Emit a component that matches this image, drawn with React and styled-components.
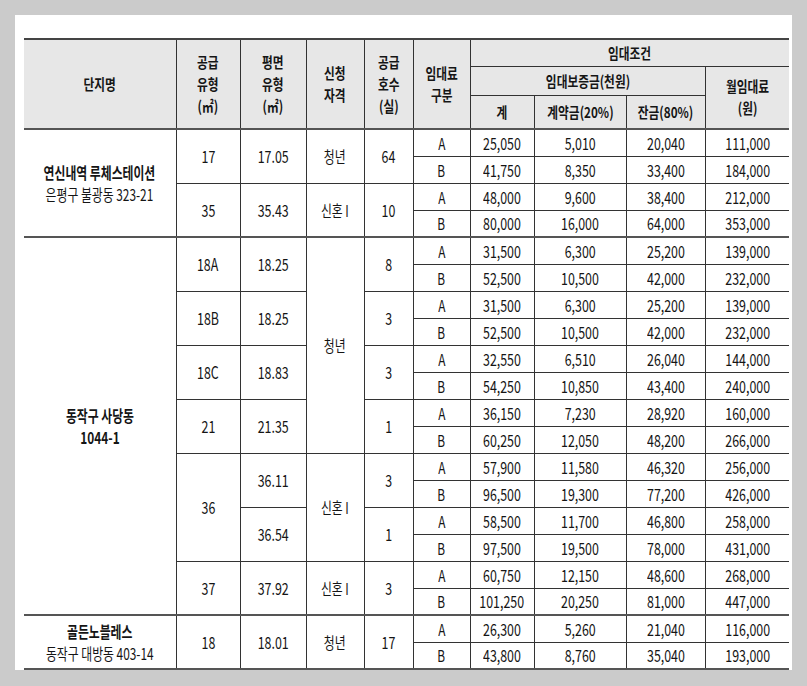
import React from 'react';
import styled, {createGlobalStyle} from 'styled-components';

const GlobalStyle = createGlobalStyle`
  body{
    margin:0;
    background:#cbcbcb;
    font-family:"Noto Sans CJK KR", "Noto Sans", sans-serif;
    color:#151515;
  }
`;

const Page = styled.div`
  padding:15px 15px 16px;
`;

const Panel = styled.div`
  width:777px;
  box-sizing:border-box;
  background:#fff;
  padding:23px 3px 0 9px;
`;

const Table = styled.table`
  width:765px;
  table-layout:fixed;
  border-collapse:collapse;
  border-top:2px solid #444;
  border-bottom:2px solid #555;
`;

const HeadRow = styled.tr`
  height:${p => p.$h}px;
`;

const Th = styled.th`
  background:#e7e7e7;
  border:1px solid #333;
  border-top:none;
  padding:0;
  font-weight:700;
  font-size:15px;
  line-height:22px;
  text-align:center;
  vertical-align:middle;

  &:first-child{border-left:none;}
  &:last-child{border-right:none;}
`;

const Row = styled.tr`
  height:27px;

  td{
    border-top:${p => p.$start ? '2px solid #555' : '1px solid #333'};
  }
`;

const Td = styled.td`
  border:1px solid #333;
  padding:0;
  font-size:${p => p.$num ? 17 : 16}px;
  line-height:22px;
  text-align:center;
  vertical-align:middle;

  &:first-child{border-left:none;}
  &:last-child{border-right:none;}
`;

const Txt = styled.span`
  display:inline-block;
  white-space:nowrap;
  margin:0 -30px;
  transform:scaleX(${p => p.$sx || 0.74});
`;

const Line = styled.div`
  font-weight:${p => p.$bold ? 700 : 400};
  font-size:16px;
`;

const widths = [152, 64, 66, 58, 49, 57, 64, 92, 79, 84];

const rows = [
  {start:true, group:{span:4, lines:[['연신내역 루체스테이션', true], ['은평구 불광동 323-21', false]]},
    type:['17', 2], area:['17.05', 2], qual:['청년', 2], units:['64', 2], k:'A', v:['25,050', '5,010', '20,040', '111,000']},
  {k:'B', v:['41,750', '8,350', '33,400', '184,000']},
  {type:['35', 2], area:['35.43', 2], qual:['신혼 I', 2], units:['10', 2], k:'A', v:['48,000', '9,600', '38,400', '212,000']},
  {k:'B', v:['80,000', '16,000', '64,000', '353,000']},
  {start:true, group:{span:14, lines:[['동작구 사당동', true], ['1044-1', true]]},
    type:['18A', 2], area:['18.25', 2], qual:['청년', 8], units:['8', 2], k:'A', v:['31,500', '6,300', '25,200', '139,000']},
  {k:'B', v:['52,500', '10,500', '42,000', '232,000']},
  {type:['18B', 2], area:['18.25', 2], units:['3', 2], k:'A', v:['31,500', '6,300', '25,200', '139,000']},
  {k:'B', v:['52,500', '10,500', '42,000', '232,000']},
  {type:['18C', 2], area:['18.83', 2], units:['3', 2], k:'A', v:['32,550', '6,510', '26,040', '144,000']},
  {k:'B', v:['54,250', '10,850', '43,400', '240,000']},
  {type:['21', 2], area:['21.35', 2], units:['1', 2], k:'A', v:['36,150', '7,230', '28,920', '160,000']},
  {k:'B', v:['60,250', '12,050', '48,200', '266,000']},
  {type:['36', 4], area:['36.11', 2], qual:['신혼 I', 4], units:['3', 2], k:'A', v:['57,900', '11,580', '46,320', '256,000']},
  {k:'B', v:['96,500', '19,300', '77,200', '426,000']},
  {area:['36.54', 2], units:['1', 2], k:'A', v:['58,500', '11,700', '46,800', '258,000']},
  {k:'B', v:['97,500', '19,500', '78,000', '431,000']},
  {type:['37', 2], area:['37.92', 2], qual:['신혼 I', 2], units:['3', 2], k:'A', v:['60,750', '12,150', '48,600', '268,000']},
  {k:'B', v:['101,250', '20,250', '81,000', '447,000']},
  {start:true, group:{span:2, lines:[['골든노블레스', true], ['동작구 대방동 403-14', false]]},
    type:['18', 2], area:['18.01', 2], qual:['청년', 2], units:['17', 2], k:'A', v:['26,300', '5,260', '21,040', '116,000']},
  {k:'B', v:['43,800', '8,760', '35,040', '193,000']},
];

// rowspan cell in the left block; numbers get the slightly larger size
const Span = ({cell, num}) => cell
  ? <Td rowSpan={cell[1]} $num={num}><Txt $sx={num ? 0.73 : 0.74}>{cell[0]}</Txt></Td>
  : null;

const Head = ({children, ...rest}) => (
  <Th {...rest}><Txt $sx={0.78}>{children}</Txt></Th>
);

const App = () => {
  return (
    <Page>
      <GlobalStyle />
      <Panel>
        <Table>
          <colgroup>
            {widths.map((w, i) => <col key={i} style={{width: w}} />)}
          </colgroup>
          <thead>
            <HeadRow $h={27}>
              <Head rowSpan={3}>단지명</Head>
              <Head rowSpan={3}>공급<br />유형<br />(㎡)</Head>
              <Head rowSpan={3}>평면<br />유형<br />(㎡)</Head>
              <Head rowSpan={3}>신청<br />자격</Head>
              <Head rowSpan={3}>공급<br />호수<br />(실)</Head>
              <Head rowSpan={3}>임대료<br />구분</Head>
              <Head colSpan={4}>임대조건</Head>
            </HeadRow>
            <HeadRow $h={29}>
              <Head colSpan={3}>임대보증금(천원)</Head>
              <Head rowSpan={2}>월임대료<br />(원)</Head>
            </HeadRow>
            <HeadRow $h={34}>
              <Head>계</Head>
              <Head>계약금(20%)</Head>
              <Head>잔금(80%)</Head>
            </HeadRow>
          </thead>
          <tbody>
            {rows.map((r, i) => (
              <Row key={i} $start={r.start}>
                {r.group && (
                  <Td rowSpan={r.group.span}>
                    <Txt>
                      {r.group.lines.map(([t, b]) => <Line key={t} $bold={b}>{t}</Line>)}
                    </Txt>
                  </Td>
                )}
                <Span cell={r.type} num />
                <Span cell={r.area} num />
                <Span cell={r.qual} />
                <Span cell={r.units} num />
                <Td><Txt>{r.k}</Txt></Td>
                {r.v.map((n, j) => <Td key={j} $num><Txt $sx={0.73}>{n}</Txt></Td>)}
              </Row>
            ))}
          </tbody>
        </Table>
      </Panel>
    </Page>
  );
};

export default App;
